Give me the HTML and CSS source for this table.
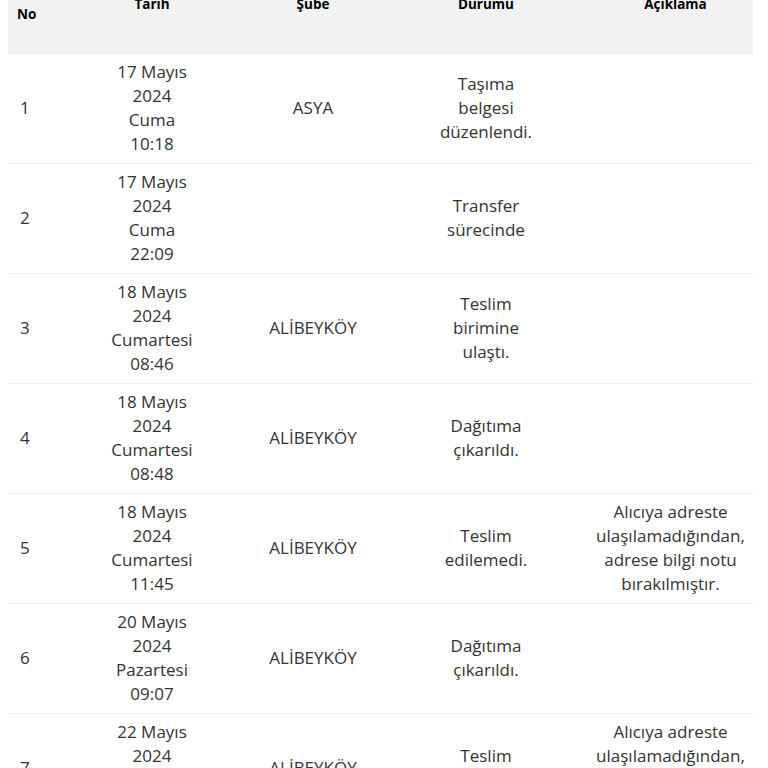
FILE: index.html
```html
<!DOCTYPE html>
<html lang="tr">
<head>
<meta charset="utf-8">
<title>Kargo Hareketleri</title>
<link rel="stylesheet" href="styles.css">
</head>
<body>
<div class="wrap">
<table class="moves">
  <colgroup>
    <col class="c-no"><col class="c-date"><col class="c-branch"><col class="c-status"><col class="c-note">
  </colgroup>
  <thead>
    <tr>
      <th class="h-no">No</th>
      <th>Tarih</th>
      <th>Şube</th>
      <th>Durumu</th>
      <th class="h-note">Açıklama</th>
    </tr>
  </thead>
  <tbody>
    <tr>
      <td class="no">1</td>
      <td>17 Mayıs<br>2024<br>Cuma<br>10:18</td>
      <td>ASYA</td>
      <td>Taşıma<br>belgesi<br>düzenlendi.</td>
      <td class="note"></td>
    </tr>
    <tr>
      <td class="no">2</td>
      <td>17 Mayıs<br>2024<br>Cuma<br>22:09</td>
      <td></td>
      <td>Transfer<br>sürecinde</td>
      <td class="note"></td>
    </tr>
    <tr>
      <td class="no">3</td>
      <td>18 Mayıs<br>2024<br>Cumartesi<br>08:46</td>
      <td>ALİBEYKÖY</td>
      <td>Teslim<br>birimine<br>ulaştı.</td>
      <td class="note"></td>
    </tr>
    <tr>
      <td class="no">4</td>
      <td>18 Mayıs<br>2024<br>Cumartesi<br>08:48</td>
      <td>ALİBEYKÖY</td>
      <td>Dağıtıma<br>çıkarıldı.</td>
      <td class="note"></td>
    </tr>
    <tr>
      <td class="no">5</td>
      <td>18 Mayıs<br>2024<br>Cumartesi<br>11:45</td>
      <td>ALİBEYKÖY</td>
      <td>Teslim<br>edilemedi.</td>
      <td class="note">Alıcıya adreste<br>ulaşılamadığından,<br>adrese bilgi notu<br>bırakılmıştır.</td>
    </tr>
    <tr>
      <td class="no">6</td>
      <td>20 Mayıs<br>2024<br>Pazartesi<br>09:07</td>
      <td>ALİBEYKÖY</td>
      <td>Dağıtıma<br>çıkarıldı.</td>
      <td class="note"></td>
    </tr>
    <tr>
      <td class="no">7</td>
      <td>22 Mayıs<br>2024<br>Çarşamba<br>11:32</td>
      <td>ALİBEYKÖY</td>
      <td>Teslim<br>edilemedi.</td>
      <td class="note">Alıcıya adreste<br>ulaşılamadığından,<br>adrese bilgi notu<br>bırakılmıştır.</td>
    </tr>
  </tbody>
</table>
</div>
</body>
</html>
```

FILE: styles.css
```css
html, body {
  margin: 0;
  padding: 0;
  background: #ffffff;
}
body {
  font-family: "Open Sans", "Noto Sans", sans-serif;
  color: #333333;
}
.wrap {
  margin: -24px 15px 0 8px;
}
.moves {
  width: 745px;
  table-layout: fixed;
  border-collapse: collapse;
}
.c-no { width: 92px; }
.c-date { width: 104px; }
.c-branch { width: 218px; }
.c-status { width: 128px; }
.c-note { width: 203px; }

.moves th {
  background: #f2f2f2;
  color: #000000;
  font-size: 13.5px;
  font-weight: 700;
  line-height: 18px;
  height: 77px;
  box-sizing: border-box;
  padding: 19px 8px 0;
  text-align: center;
  vertical-align: top;
  border-bottom: 1px solid #e8e8e8;
}
.moves th.h-no {
  text-align: left;
  vertical-align: middle;
  padding: 0 9px;
}
.moves th.h-note {
  padding-left: 48px;
  padding-right: 0;
}
.moves td {
  font-size: 17px;
  line-height: 24px;
  padding: 6px 6px 7px;
  text-align: center;
  vertical-align: middle;
  border-bottom: 1px solid #eeeeee;
}
.moves td.no {
  text-align: left;
  padding-left: 12px;
}
.moves td.note {
  padding-left: 38px;
  padding-right: 0;
}
```
